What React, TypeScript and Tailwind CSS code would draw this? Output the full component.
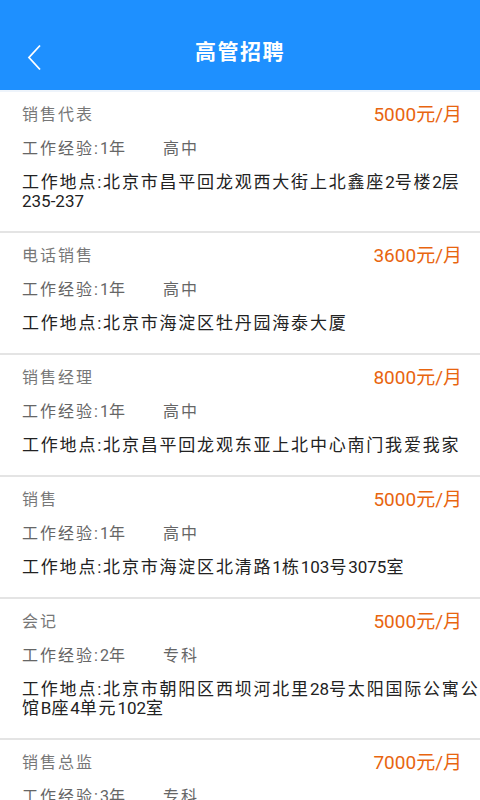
const jobs = [
  { title: "销售代表", salary: "5000元/月", exp: "1年", edu: "高中", addr: "北京市昌平回龙观西大街上北鑫座2号楼2层235-237" },
  { title: "电话销售", salary: "3600元/月", exp: "1年", edu: "高中", addr: "北京市海淀区牡丹园海泰大厦" },
  { title: "销售经理", salary: "8000元/月", exp: "1年", edu: "高中", addr: "北京昌平回龙观东亚上北中心南门我爱我家" },
  { title: "销售", salary: "5000元/月", exp: "1年", edu: "高中", addr: "北京市海淀区北清路1栋103号3075室" },
  { title: "会记", salary: "5000元/月", exp: "2年", edu: "专科", addr: "北京市朝阳区西坝河北里28号太阳国际公寓公馆B座4单元102室" },
  { title: "销售总监", salary: "7000元/月", exp: "3年", edu: "专科", addr: "北京市朝阳区西坝河北里28号" },
];

const font = { fontFamily: "Roboto, 'Noto Sans CJK SC', sans-serif" };

// latin/digit runs get no letter spacing, the CJK around them does
function Spaced({ text }: { text: string }) {
  const parts = text.split(/([0-9A-Za-z\-]+)/);
  return (
    <>
      {parts.map((p, i) =>
        /^[0-9A-Za-z\-]+$/.test(p) ? (
          <span key={i} className="tracking-normal">{p}</span>
        ) : (
          <span key={i}>{p}</span>
        )
      )}
    </>
  );
}

function JobItem({ job }: { job: (typeof jobs)[number] }) {
  return (
    <div className="pl-[22px] pt-[6px] pb-[20px] border-b-2 border-[#e4e4e4]">
      <div className="flex justify-between items-center h-[34px] pr-[18px]">
        <span className="text-[16px] tracking-[2px] text-[#777777]">{job.title}</span>
        <span className="text-[19px] text-[#e8650f]">{job.salary}</span>
      </div>
      <div className="flex items-center h-[33px] text-[16px] tracking-[2px] text-[#666666]">
        <span className="w-[141px]"><Spaced text={`工作经验:${job.exp}`} /></span>
        <span>{job.edu}</span>
      </div>
      <div className="mt-[8px] text-[17px] leading-[19px] tracking-[1.8px] text-[#222222]">
        <Spaced text={`工作地点:${job.addr}`} />
      </div>
    </div>
  );
}

export default function App() {
  return (
    <div className="w-[480px] h-[800px] overflow-hidden bg-white" style={font}>
      <div className="h-[90px] bg-[#1e90ff] flex items-start">
        <div className="w-[60px] pl-[27px] pt-[44px]">
          <svg width="15" height="27" viewBox="0 0 15 27" fill="none">
            <path d="M13 1.5 L2 13.5 L13 25.5" stroke="white" strokeWidth="1.8" />
          </svg>
        </div>
        <div className="flex-1 text-center pt-[38px] pr-[60px] text-white text-[21px] font-bold tracking-[1.5px] leading-[28px]">
          高管招聘
        </div>
      </div>
      <div className="h-[2px] bg-[#eef4fb]" />
      {jobs.map((job, i) => (
        <JobItem key={i} job={job} />
      ))}
    </div>
  );
}
